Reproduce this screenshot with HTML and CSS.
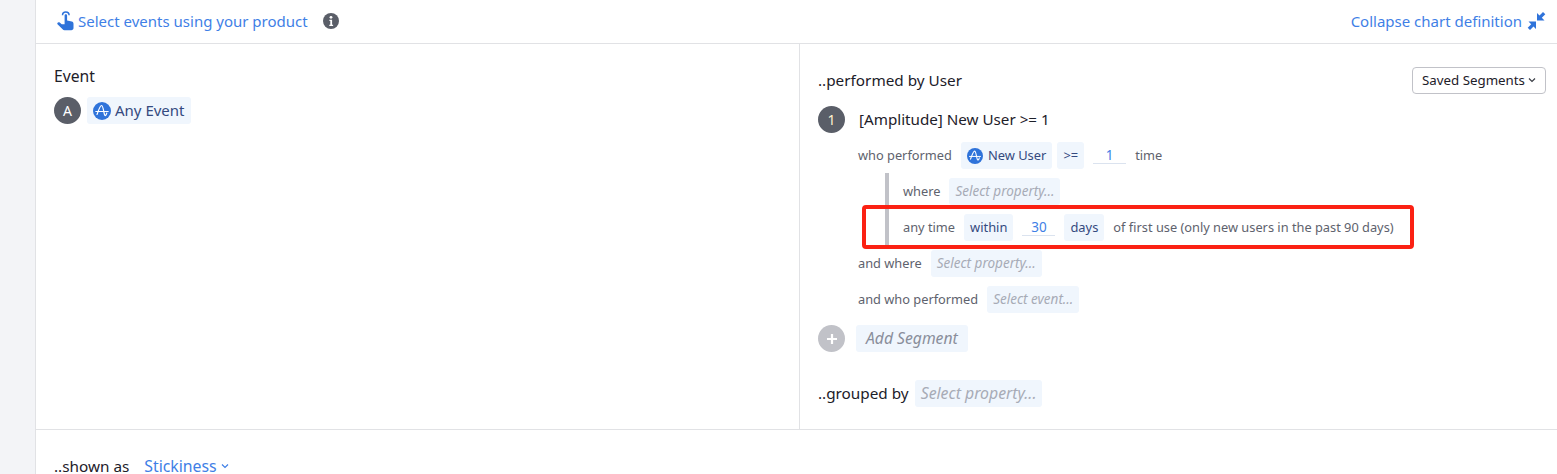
FILE: index.html
```html
<!DOCTYPE html>
<html lang="en">
<head>
    <meta charset="UTF-8">
    <meta name="viewport" content="width=device-width, initial-scale=1.0">
    <title>Chart definition</title>
    <link rel="stylesheet" href="styles.css">
</head>
<body>
    <svg class="sprite" width="0" height="0">
        <symbol id="amp" viewBox="0 0 18 18">
            <circle cx="9" cy="9" r="9" fill="#2f73da"/>
            <path d="M4 12.500C5.500 8.500 7 3.500 8.500 3.500c1.500 0 2 5.500 3 9 .5 1.700 1.600 1.300 2.300-1.500" fill="none" stroke="#fff" stroke-width="1.200" stroke-linecap="round"/>
            <path d="M2.800 9.500h12.400" fill="none" stroke="#fff" stroke-width="1.100" stroke-linecap="round"/>
        </symbol>
    </svg>

    <div class="sidebar"></div>

    <div class="main">
        <div class="topbar">
            <div class="topbar-left">
                <svg class="hand-icon" width="18" height="20" viewBox="0 0 18 20">
                    <path d="M6.500 4.300a3.300 3.300 0 0 1 6.600 0" fill="none" stroke="#2f73da" stroke-width="1.500"/>
                    <path d="M8.600 4.500c0-1.600 2.500-1.600 2.500 0v5l4.700 1.100c1.100.3 1.700 1.100 1.700 2.200v4.200c0 1.300-.9 2.200-2.200 2.200H8.500c-.8 0-1.400-.3-1.900-.9L1.500 13.300c-.9-1.300.9-2.900 2.200-1.700l2 1.700h2.900z" fill="#2f73da"/>
                </svg>
                <span class="link">Select events using your product</span>
                <svg class="info-icon" width="16" height="16" viewBox="0 0 16 16">
                    <circle cx="8" cy="8" r="8" fill="#5a5e68"/>
                    <circle cx="8" cy="4.300" r="1.400" fill="#fff"/>
                    <path d="M6.400 6.800h2.700v5h1v1.300H6.300v-1.300h1v-3.700h-.9z" fill="#fff"/>
                </svg>
            </div>
            <div class="topbar-right">
                <span class="link">Collapse chart definition</span>
                <svg width="19" height="18" viewBox="0 0 19 18" fill="#2f73da">
                    <path d="M10 8.500h7.500l-2.700-2.700 3.500-3.500L16 0l-3.500 3.500L10 1z"/>
                    <path d="M9 9.500H1.500l2.700 2.700-3.500 3.500L3 18l3.500-3.500L9 17z"/>
                </svg>
            </div>
        </div>

        <div class="panels">
            <div class="panel-left">
                <div class="panel-label">Event</div>
                <div class="event-row">
                    <span class="badge">A</span>
                    <span class="chip chip-event"><svg width="18" height="18"><use href="#amp"/></svg><span>Any Event</span></span>
                </div>
            </div>

            <div class="panel-right">
                <div class="segment-head">
                    <div class="heading heading-user">..performed by User</div>
                    <button class="saved-btn">Saved Segments<svg width="8" height="6" viewBox="0 0 8 6"><path d="M1 1.500l3 3 3-3" fill="none" stroke="#3a3d45" stroke-width="1.200"/></svg></button>
                </div>

                <div class="segment-title">
                    <span class="badge badge-num">1</span>
                    <span class="title-text">[Amplitude] New User &gt;= 1</span>
                </div>

                <div class="rows">
                    <div class="row">
                        <span class="muted">who performed</span>
                        <span class="chip chip-small"><svg width="16" height="16"><use href="#amp"/></svg>New User</span>
                        <span class="chip chip-small chip-joined">&gt;=</span>
                        <span class="num-input">1</span>
                        <span class="muted">time</span>
                    </div>
                    <div class="nested">
                        <div class="row">
                            <span class="muted">where</span>
                            <span class="chip chip-empty">Select property...</span>
                        </div>
                        <div class="row">
                            <span class="muted">any time</span>
                            <span class="chip chip-small">within</span>
                            <span class="num-input">30</span>
                            <span class="chip chip-small">days</span>
                            <span class="muted">of first use (only new users in the past 90 days)</span>
                        </div>
                    </div>
                    <div class="row">
                        <span class="muted">and where</span>
                        <span class="chip chip-empty">Select property...</span>
                    </div>
                    <div class="row">
                        <span class="muted">and who performed</span>
                        <span class="chip chip-empty">Select event...</span>
                    </div>
                </div>

                <div class="add-row">
                    <span class="badge badge-add">
                        <svg width="12" height="12" viewBox="0 0 12 12"><path d="M6 1v10M1 6h10" stroke="#fff" stroke-width="2.200"/></svg>
                    </span>
                    <span class="chip chip-add">Add Segment</span>
                </div>

                <div class="group-row">
                    <span class="heading">..grouped by</span>
                    <span class="chip chip-empty chip-group">Select property...</span>
                </div>

                <div class="highlight"></div>
            </div>
        </div>

        <div class="shown-row">
            <span class="heading">..shown as</span>
            <span class="link shown-link">Stickiness<svg width="8" height="6" viewBox="0 0 8 6"><path d="M1 1.500l3 3 3-3" fill="none" stroke="#3f7fe6" stroke-width="1.200"/></svg></span>
        </div>
    </div>
</body>
</html>
```

FILE: styles.css
```css
html, body {
    height: 100%;
}
body {
    margin: 0;
    display: flex;
    height: 100vh;
    overflow: hidden;
    background-color: #fff;
    font-family: "Noto Sans", Roboto, sans-serif;
    font-size: 14px;
    color: #1d2029;
}
.sprite {
    position: absolute;
}
.sidebar {
    width: 35px;
    flex: none;
    background-color: #f3f4f7;
    border-right: 1px solid #e1e2e5;
}
.main {
    flex: 1;
    min-width: 0;
}
.link {
    color: #3f7fe6;
}

.topbar {
    height: 41px;
    display: flex;
    justify-content: space-between;
    align-items: center;
    padding: 0 11px 2px 20px;
    border-bottom: 1px solid #e1e2e5;
    font-size: 15px;
}
.topbar-left, .topbar-right {
    display: flex;
    align-items: center;
}
.hand-icon {
    margin-right: 4px;
}
.info-icon {
    margin-left: 15px;
}
.topbar-right svg {
    margin-left: 5px;
}

.panels {
    display: flex;
    height: 385px;
    border-bottom: 1px solid #e1e2e5;
}
.panel-left {
    width: 764px;
    flex: none;
    padding: 22px 18px 0;
    box-sizing: border-box;
    border-right: 1px solid #e1e2e5;
}
.panel-label {
    height: 20px;
    line-height: 20px;
    font-size: 15.700px;
}
.event-row {
    display: flex;
    align-items: center;
    gap: 6px;
    margin-top: 11px;
}
.badge {
    width: 27px;
    height: 27px;
    flex: none;
    border-radius: 50%;
    background-color: #5a5e68;
    color: #fff;
    display: flex;
    align-items: center;
    justify-content: center;
    font-size: 14px;
}
.badge-num {
    color: #fff3cf;
}
.badge-add {
    background-color: #c1c2c8;
}

.chip {
    height: 27px;
    box-sizing: border-box;
    display: inline-flex;
    align-items: center;
    padding: 0 6px 2px;
    border-radius: 3px;
    background-color: #f0f6fd;
    color: #354a80;
}
.chip svg {
    margin-bottom: -2px;
}
.chip-event {
    gap: 4px;
    font-size: 15px;
}
.chip-small {
    gap: 5px;
    font-size: 12.900px;
}
.chip-joined {
    margin-left: -4px;
}
.chip-empty {
    color: #a7abb6;
    font-style: italic;
    font-size: 13.500px;
}
.chip-add {
    padding: 0 10px 2px;
    color: #8a8e9b;
    font-style: italic;
    font-size: 15.700px;
}
.chip-group {
    font-size: 15.800px;
}

.panel-right {
    flex: 1;
    position: relative;
    padding: 0 11px 0 18px;
}
.segment-head {
    display: flex;
    justify-content: space-between;
    align-items: center;
    margin-top: 23px;
}
.heading {
    font-size: 15.300px;
    color: #1d2029;
    padding-bottom: 2px;
}
.saved-btn {
    height: 27px;
    width: 134px;
    padding: 0 0 2px;
    display: flex;
    align-items: center;
    justify-content: center;
    gap: 3px;
    background-color: #fff;
    border: 1px solid #c1c2c8;
    border-radius: 4px;
    font-family: inherit;
    font-size: 13.300px;
    color: #1d2029;
}
.segment-title {
    display: flex;
    align-items: center;
    gap: 14px;
    margin-top: 12px;
}
.title-text {
    font-size: 15.200px;
    padding-bottom: 2px;
}
.rows {
    margin: 9px 0 0 40px;
    display: flex;
    flex-direction: column;
    gap: 9px;
}
.row {
    display: flex;
    align-items: center;
    gap: 9px;
    height: 27px;
}
.muted {
    font-size: 12.800px;
    color: #5e626d;
    padding-bottom: 2px;
}
.num-input {
    width: 33px;
    height: 16px;
    line-height: 16px;
    text-align: center;
    color: #3f7fe6;
    font-size: 13.500px;
    border-bottom: 1px solid #dbe3ef;
}
.nested {
    margin: -5px 0 -4px 27px;
    padding: 5px 0 4px 14px;
    border-left: 4px solid #c1c2c8;
    display: flex;
    flex-direction: column;
    gap: 9px;
}
.add-row {
    display: flex;
    align-items: center;
    gap: 11px;
    margin-top: 12px;
}
.group-row {
    display: flex;
    align-items: center;
    gap: 6px;
    margin-top: 28px;
}
.highlight {
    position: absolute;
    left: 62px;
    top: 161px;
    width: 552px;
    height: 44px;
    box-sizing: border-box;
    border: 4px solid #fb2113;
    border-radius: 4px;
}

.shown-row {
    display: flex;
    align-items: center;
    gap: 15px;
    padding: 28px 0 0 18px;
    line-height: 16px;
}
.shown-row .heading {
    padding-bottom: 0;
}
.shown-link {
    display: flex;
    align-items: center;
    gap: 4px;
    font-size: 15.800px;
}
```
